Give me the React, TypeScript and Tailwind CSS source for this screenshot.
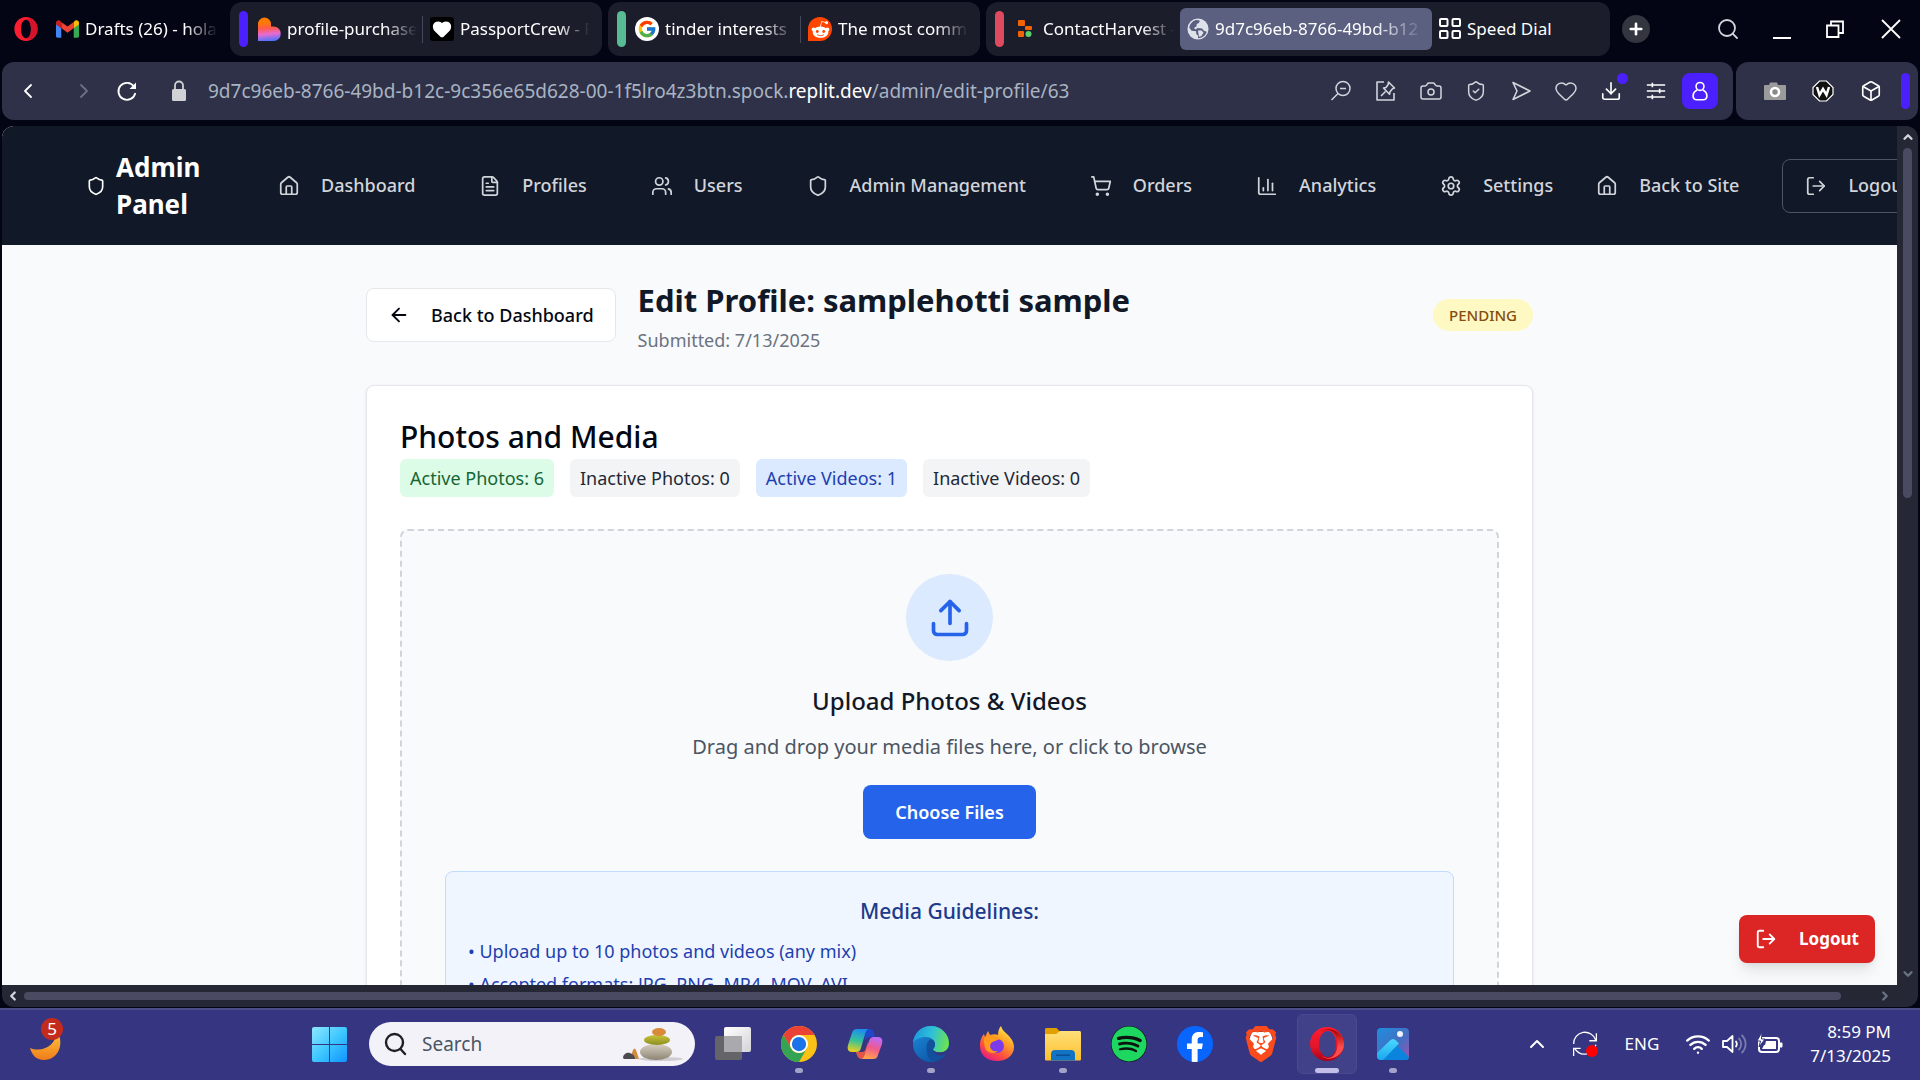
import type { ReactNode } from "react";
import {
  ArrowLeft, Box, Camera, ChartColumn, ChevronDown, ChevronLeft, ChevronRight, ChevronUp, Download, FileText, Heart,
  House, LogOut, Plus, Search, Settings, Shield, ShieldCheck, ShoppingCart, Upload, Users, Wifi,
} from "lucide-react";
import { FcGoogle } from "react-icons/fc";
import { FaFacebookF, FaRedditAlien, FaSpotify } from "react-icons/fa";
import { SiBrave } from "react-icons/si";

const ui = "font-['Noto_Sans','Open_Sans',sans-serif]";

/* ---------- brand marks ---------- */

const operaRing =
  "M16 0C7.200 0 .5 7 .5 16S7.200 32 16 32s15.500-7 15.500-16S24.800 0 16 0zm0 3.800c4 0 6.600 5 6.600 12.200S20 28.200 16 28.200 9.400 23.200 9.400 16 12 3.800 16 3.800z";

function OperaTabLogo() {
  return (
    <svg viewBox="0 0 32 32" className="size-6" aria-hidden="true">
      <path fillRule="evenodd" fill="#fa1e30" d={operaRing} />
      <path fill="#c8102a" opacity=".75" d="M16 3.800c2-2 5-2.400 7.500-1.200C28 5 31.500 10 31.500 16c0 6-3.500 11-8 13.400-2.500 1.200-5.500.8-7.500-1.200 4 0 6.600-5 6.600-12.200S20 3.800 16 3.800z" />
    </svg>
  );
}

function OperaTaskLogo() {
  return (
    <svg viewBox="0 0 36 36" className="size-9" aria-hidden="true">
      <defs>
        <linearGradient id="opl" x1="0" y1="0" x2="0" y2="1"><stop offset="0" stopColor="#ff1b2d" /><stop offset=".6" stopColor="#e0152a" /><stop offset="1" stopColor="#a70014" /></linearGradient>
        <linearGradient id="opr" x1="0" y1="0" x2="0" y2="1"><stop offset="0" stopColor="#9c0000" /><stop offset=".6" stopColor="#ff4b4b" /><stop offset="1" stopColor="#ff4b4b" /></linearGradient>
      </defs>
      <path fill="url(#opl)" fillRule="evenodd" d="M18 1a17 17 0 1 0 0 34 17 17 0 0 0 0-34zm1 4c5 0 8 6 8 13s-3 13-8 13c-5 0-9-5.500-9-13s4-13 9-13z" />
      <path fill="url(#opr)" d="M12.500 6.500C15 3.800 18.500 2.800 22 3.500 29.500 5 35 10.500 35 18s-5.500 13-13 14.500c-3.500.7-7-.3-9.500-3 2 1.600 4.200 2.500 6.500 2.500 5.500 0 9.500-6.200 9.500-14S24.500 4 19 4c-2.300 0-4.500.9-6.500 2.500z" />
    </svg>
  );
}

function GmailLogo() {
  return (
    <svg viewBox="0 0 24 18" className="h-[18px] w-[23px] shrink-0" aria-hidden="true">
      <path fill="#4285f4" d="M0 3v13.500C0 17.300.7 18 1.600 18H5.500V8z" />
      <path fill="#34a853" d="M24 3v13.500c0 .8-.7 1.500-1.600 1.500H18.500V8z" />
      <path fill="#ea4335" d="M5.500 8V1.600L12 6.500l6.500-4.900V8L12 13z" />
      <path fill="#c5221f" d="M0 2.500v1.700L5.500 8.300V1.600L4.200.5C2.400-.8 0 .4 0 2.500z" />
      <path fill="#fbbc04" d="M24 2.500v1.700l-5.500 4.100V1.600L19.800.5C21.600-.8 24 .4 24 2.500z" />
    </svg>
  );
}

function LovableLogo() {
  return (
    <svg viewBox="0 0 24 24" className="size-6 shrink-0" aria-hidden="true">
      <defs>
        <linearGradient id="lovable" x1=".4" y1="0" x2=".5" y2="1">
          <stop offset=".2" stopColor="#ff7a00" />
          <stop offset=".45" stopColor="#ff5a4e" />
          <stop offset=".7" stopColor="#e86bd0" />
          <stop offset="1" stopColor="#4b73ff" />
        </linearGradient>
      </defs>
      <path fill="url(#lovable)" d="M1 7a6.500 6.500 0 0 1 13 0v2.500h2.500a7.200 7.200 0 0 1 0 14.500H1z" />
    </svg>
  );
}

function HeartTile() {
  return (
    <span className="flex size-6 shrink-0 items-center justify-center rounded-[3px] bg-black">
      <Heart className="size-5 fill-white text-white" />
    </span>
  );
}

function GoogleTile() {
  return (
    <span className="flex size-6 shrink-0 items-center justify-center rounded-full bg-white">
      <FcGoogle className="size-5" />
    </span>
  );
}

function RedditTile() {
  return (
    <span className="flex size-6 shrink-0 items-center justify-center rounded-full rounded-bl-none bg-[#ff4500]">
      <FaRedditAlien className="size-[19px] text-white" />
    </span>
  );
}

function ReplitLogo() {
  return (
    <svg viewBox="0 0 24 24" className="size-6 shrink-0" aria-hidden="true">
      <rect x="5" y="3" width="7" height="6" rx="1" fill="#f26207" />
      <rect x="12" y="9" width="7" height="4" rx="1" fill="#f26207" />
      <rect x="5" y="14" width="6" height="6" rx="1" fill="#f26207" />
      <circle cx="15.500" cy="17" r="3" fill="#5fd068" />
    </svg>
  );
}

function GlobeIcon() {
  return (
    <svg viewBox="0 0 24 24" className="size-[22px] shrink-0" aria-hidden="true">
      <circle cx="12" cy="12" r="11.500" fill="#dfe2e8" />
      <path fill="#5b6080" d="M9 2.500c-3 1-6 4-6.500 8l2.500 3.500 5 .5v3l2 1.500v3c5 0 8.500-3 9.500-7l-3-1-2-2.500-5-.5-2 1.500-2-1.500 3-2V6.500l2.500-1 1-2.500c-1.500-.7-3.500-.9-5-.5z" />
      <path fill="#dfe2e8" d="M12 13.500h4l2 2.500-2.500 4-2.500.5z" />
    </svg>
  );
}

/* ---------- browser tabs ---------- */

function Tab({ icon, label, className, fade = true }: { icon: ReactNode; label: string; className: string; fade?: boolean }) {
  return (
    <button type="button" className={`flex h-[42px] shrink-0 items-center gap-[6px] overflow-hidden rounded-md text-left ${className}`}>
      {icon}
      <span
        className={
          fade
            ? "min-w-0 flex-1 overflow-hidden whitespace-nowrap [mask-image:linear-gradient(to_right,black_75%,transparent)]"
            : "whitespace-nowrap"
        }
      >
        {label}
      </span>
    </button>
  );
}

function TabGroup({ pill, className, children }: { pill: string; className: string; children: ReactNode }) {
  return (
    <div className={`flex h-[54px] shrink-0 items-center rounded-xl bg-[#1b1d2b] pl-[9px] ${className}`}>
      <span className={`h-9 w-[9px] shrink-0 rounded-full ${pill}`} />
      {children}
    </div>
  );
}

function TabStrip() {
  return (
    <div className="flex h-[62px] items-center pb-1 pl-[14px] pr-[15px] text-[17px] text-white">
      <button type="button" aria-label="Opera menu" className="shrink-0">
        <OperaTabLogo />
      </button>
      <Tab className="ml-[18px] w-[162px]" icon={<GmailLogo />} label="Drafts (26) - hola" />
      <TabGroup pill="bg-[#4c1fff]" className="ml-3 w-[372px]">
        <Tab className="ml-[9px] w-40" icon={<LovableLogo />} label="profile-purchase" />
        <span className="ml-[5px] h-[27px] w-px bg-[#45485a]" />
        <Tab className="ml-[7px] w-40" icon={<HeartTile />} label="PassportCrew - F" />
      </TabGroup>
      <TabGroup pill="bg-[#57bb94]" className="ml-[6px] w-[372px]">
        <Tab className="ml-[9px] w-40" icon={<GoogleTile />} label="tinder interests |" />
        <span className="ml-[5px] h-[27px] w-px bg-[#45485a]" />
        <Tab className="ml-[7px] w-40" icon={<RedditTile />} label="The most comm" />
      </TabGroup>
      <TabGroup pill="bg-[#e04a5f]" className="ml-[6px] w-[624px]">
        <Tab className="ml-[9px] w-[162px]" icon={<ReplitLogo />} label="ContactHarvest -" />
        <Tab className="ml-[5px] w-[252px] bg-[#5b6080] px-[7px]" icon={<GlobeIcon />} label="9d7c96eb-8766-49bd-b12" />
        <Tab
          className="ml-[7px]"
          fade={false}
          label="Speed Dial"
          icon={
            <svg viewBox="0 0 22 22" className="size-[22px]" fill="none" stroke="#fff" strokeWidth="2" aria-hidden="true">
              <rect x="1" y="1" width="7.500" height="7" rx="1" />
              <rect x="13.500" y="1" width="7.500" height="7" rx="1" />
              <rect x="1" y="13" width="7.500" height="7" rx="1" />
              <rect x="13.500" y="13" width="7.500" height="7" rx="1" />
            </svg>
          }
        />
      </TabGroup>
      <button type="button" aria-label="New tab" className="ml-3 flex size-7 shrink-0 items-center justify-center rounded-full bg-[#33353f]">
        <Plus className="size-[18px]" strokeWidth={3.500} />
      </button>
      <div className="ml-auto flex items-center gap-[31px]">
        <button type="button" aria-label="Search tabs"><Search className="size-6 text-gray-300" strokeWidth={1.800} /></button>
        <button type="button" aria-label="Minimize" className="flex h-5 w-[22px] items-end justify-center">
          <span className="h-[2px] w-[18px] bg-white" />
        </button>
        <button type="button" aria-label="Restore">
          <svg viewBox="0 0 22 22" className="size-[22px]" fill="none" stroke="#fff" strokeWidth="1.800" aria-hidden="true">
            <path d="M3 7.500h11.500V19H3z" />
            <path d="M7 7V3.500h12V15h-4" />
          </svg>
        </button>
        <button type="button" aria-label="Close">
          <svg viewBox="0 0 28 28" className="size-7" fill="none" stroke="#fff" strokeWidth="1.800" aria-hidden="true">
            <path d="m5 5 18 18M23 5 5 23" />
          </svg>
        </button>
      </div>
    </div>
  );
}

/* ---------- address bar ---------- */

function BarButton({ label, children }: { label: string; children: ReactNode }) {
  return (
    <button type="button" aria-label={label} className="relative flex size-[25px] shrink-0 items-center justify-center">
      {children}
    </button>
  );
}

function AddressBar() {
  return (
    <div className="flex h-[58px] gap-[3px] px-[2px] text-gray-300">
      <div className="flex min-w-0 flex-1 items-center rounded-xl bg-[#2e3147] pl-[14px] pr-[15px]">
        <button type="button" aria-label="Back" className="text-white"><ChevronLeft className="size-6" strokeWidth={1.800} /></button>
        <button type="button" aria-label="Forward" className="ml-8 text-[#6d7085]"><ChevronRight className="size-6" strokeWidth={1.800} /></button>
        <button type="button" aria-label="Reload" className="ml-[19px] text-white">
          <svg viewBox="0 0 24 24" className="size-6" fill="none" stroke="currentColor" strokeWidth="1.800" aria-hidden="true">
            <path d="M19 7.500A8.500 8.500 0 1 0 20.300 14" />
            <path fill="currentColor" stroke="none" d="M21 3.500v6.500h-6.500z" />
          </svg>
        </button>
        <svg viewBox="0 0 18 22" className="ml-[31px] h-[22px] w-[18px] shrink-0" aria-hidden="true">
          <rect x="2" y="9" width="14" height="12" rx="1.500" fill="#cfd1d4" />
          <path d="M5 10V5.500a4 4 0 0 1 8 0V10" fill="none" stroke="#cfd1d4" strokeWidth="1.800" />
        </svg>
        <p className="ml-5 min-w-0 flex-1 overflow-hidden whitespace-nowrap text-[19px] text-[#a9b3c2]">
          9d7c96eb-8766-49bd-b12c-9c356e65d628-00-1f5lro4z3btn.spock.<span className="text-white">replit.dev</span>/admin/edit-profile/63
        </p>
        <div className="flex items-center gap-5">
          <BarButton label="Zoom">
            <svg viewBox="0 0 24 24" className="size-6" fill="none" stroke="currentColor" strokeWidth="1.500" aria-hidden="true">
              <circle cx="14" cy="9.500" r="7" />
              <path d="m9 14.500-6.500 6.500M11 9.500h6" />
            </svg>
          </BarButton>
          <BarButton label="Edit pinboard">
            <svg viewBox="0 0 24 24" className="size-6" fill="none" stroke="currentColor" strokeWidth="1.600" strokeLinejoin="round" aria-hidden="true">
              <path d="M10 3H3v18h17v-7" />
              <path d="m14.500 3 6 6-2 .8-2.500 3-.5 2.500-6-6.300 2.500-.5 2.200-3zM11.500 12.500 7 17" />
            </svg>
          </BarButton>
          <BarButton label="Snapshot"><Camera className="size-6" strokeWidth={1.500} /></BarButton>
          <BarButton label="Privacy protection"><ShieldCheck className="size-[22px]" strokeWidth={1.600} /></BarButton>
          <BarButton label="Send">
            <svg viewBox="0 0 24 24" className="size-6" fill="none" stroke="currentColor" strokeWidth="1.600" strokeLinejoin="round" aria-hidden="true">
              <path d="M4 3.500 21 12 4 20.500 8 12z" />
            </svg>
          </BarButton>
          <BarButton label="Bookmark"><Heart className="size-6" strokeWidth={1.500} /></BarButton>
          <BarButton label="Downloads">
            <Download className="size-[22px] text-white" strokeWidth={1.800} />
            <span className="absolute -right-[5px] -top-[6px] size-[11px] rounded-full bg-[#4c1fff]" />
          </BarButton>
          <BarButton label="Easy setup">
            <svg viewBox="0 0 24 24" className="size-[22px]" fill="none" stroke="#fff" strokeWidth="1.800" aria-hidden="true">
              <path d="M2 5.500h20M2 12h20M2 18.500h20M8 3v5M16 9.500v5M8 16v5" />
            </svg>
          </BarButton>
        </div>
        <button type="button" aria-label="Account" className="ml-[14px] flex size-9 shrink-0 items-center justify-center rounded-lg bg-[#4c1fff]">
          <svg viewBox="0 0 24 24" className="size-[22px]" fill="none" stroke="#fff" strokeWidth="1.800" aria-hidden="true">
            <circle cx="12" cy="7" r="4.300" />
            <path d="M9 11c-3 1.300-4.500 3.500-4.500 6.500 0 2.500 1.500 4 4 4h7c2.500 0 4-1.500 4-4 0-3-1.500-5.200-4.500-6.500" />
          </svg>
        </button>
      </div>
      <div className="flex w-[182px] shrink-0 items-center rounded-xl bg-[#2e3147] pl-[26px] pr-2">
        <div className="flex items-center gap-[23px]">
          <BarButton label="Screenshot extension">
            <svg viewBox="0 0 24 24" className="size-6" aria-hidden="true">
              <path fill="#9b9b9b" d="M2 6h4l1-2.500h7L15 6h7a1 1 0 0 1 1 1v13a1 1 0 0 1-1 1H2a1 1 0 0 1-1-1V7a1 1 0 0 1 1-1z" />
              <circle cx="12" cy="13" r="4" fill="#8a8a8a" stroke="#fff" strokeWidth="2.600" />
            </svg>
          </BarButton>
          <BarButton label="W extension">
            <svg viewBox="0 0 24 24" className="size-6" aria-hidden="true">
              <path fill="#111" stroke="#fff" strokeWidth="1.200" d="M8.500 2h7l6.500 6.500v7L15.500 22h-7L2 15.500v-7z" />
              <path fill="none" stroke="#fff" strokeWidth="2.500" d="m6 8 2.500 8L12 10l3.500 6L18 8" />
            </svg>
          </BarButton>
          <BarButton label="Extensions"><Box className="size-[22px] text-white" strokeWidth={1.800} /></BarButton>
        </div>
        <span className="ml-auto h-9 w-[9px] rounded-full bg-[#4c1fff]" />
      </div>
    </div>
  );
}

/* ---------- admin page ---------- */

const navItems = [
  { label: "Dashboard", Icon: House },
  { label: "Profiles", Icon: FileText },
  { label: "Users", Icon: Users },
  { label: "Admin Management", Icon: Shield },
  { label: "Orders", Icon: ShoppingCart },
  { label: "Analytics", Icon: ChartColumn },
  { label: "Settings", Icon: Settings },
];

function AdminNav() {
  return (
    <header className="flex h-[119px] items-center overflow-hidden whitespace-nowrap bg-[#111827] pl-[84px] text-[18px] font-medium text-[#d1d5db]">
      <a href="#admin" className="flex shrink-0 items-center gap-[10px] text-[26px] font-bold leading-[37px] text-white">
        <Shield className="size-5" />
        <span className="w-[85px] whitespace-normal">Admin Panel</span>
      </a>
      <nav className="ml-[77px] flex shrink-0 items-center gap-16">
        {navItems.map(({ label, Icon }) => (
          <a key={label} href="#nav" className="flex items-center gap-[21px]">
            <Icon className="size-[22px]" strokeWidth={1.900} />
            {label}
          </a>
        ))}
      </nav>
      <a href="#site" className="ml-[43px] flex shrink-0 items-center gap-[21px]">
        <House className="size-[22px]" strokeWidth={1.900} />
        Back to Site
      </a>
      <button type="button" className="ml-[43px] flex h-[54px] shrink-0 items-center gap-[21px] rounded-lg border border-[#4b5563] px-[22px]">
        <LogOut className="size-[22px]" strokeWidth={1.900} />
        Logout
      </button>
    </header>
  );
}

const counters = [
  { label: "Active Photos: 6", tone: "bg-[#dcfce7] text-[#166534]" },
  { label: "Inactive Photos: 0", tone: "bg-[#f3f4f6] text-[#1f2937]" },
  { label: "Active Videos: 1", tone: "bg-[#dbeafe] text-[#1e40af]" },
  { label: "Inactive Videos: 0", tone: "bg-[#f3f4f6] text-[#1f2937]" },
];

function EditProfile() {
  return (
    <main className="mx-auto w-full max-w-[1167px] pt-[30px]">
      <div className="flex items-center">
        <button type="button" className="flex h-[54px] items-center gap-[21px] rounded-lg border border-gray-200 bg-white px-[21px] text-[18px] font-medium text-gray-950">
          <ArrowLeft className="size-[22px]" />
          Back to Dashboard
        </button>
        <div className="ml-[22px]">
          <h1 className="text-[31px] font-bold leading-[50px] text-[#111827]">Edit Profile: samplehotti sample</h1>
          <p className="text-[18px] leading-[30px] text-[#6b7280]">Submitted: 7/13/2025</p>
        </div>
        <span className="ml-auto rounded-full bg-[#fef9c3] px-4 text-[15px] font-medium leading-8 text-[#854d0e]">PENDING</span>
      </div>
      <section className="mt-[30px] rounded-lg border border-gray-200 bg-white px-[33px] pb-10 pt-[33px] shadow-sm">
        <h2 className="text-[30px] font-medium leading-9 text-gray-950">Photos and Media</h2>
        <div className="mt-1 flex gap-4 text-[18px] leading-[38px]">
          {counters.map(({ label, tone }) => (
            <span key={label} className={`rounded-md px-[10px] ${tone}`}>{label}</span>
          ))}
        </div>
        <div className="mt-8 flex flex-col items-center rounded-lg border-2 border-dashed border-[#d1d5db] bg-[#f9fafb] p-[43px]">
          <span className="flex size-[87px] items-center justify-center rounded-full bg-[#dbeafe]">
            <Upload className="size-11 text-[#2563eb]" />
          </span>
          <h3 className="mt-6 text-[24px] font-medium leading-8 text-[#111827]">Upload Photos &amp; Videos</h3>
          <p className="mt-4 text-[20px] leading-7 text-[#4b5563]">Drag and drop your media files here, or click to browse</p>
          <button type="button" className="mt-6 h-[54px] rounded-lg bg-[#2563eb] px-8 text-[18px] font-semibold text-white">Choose Files</button>
          <div className="mt-8 w-full rounded-lg border border-[#bfdbfe] bg-[#eff6ff] px-[22px] py-[25px]">
            <h4 className="text-center text-[21px] font-medium leading-7 text-[#1e3a8a]">Media Guidelines:</h4>
            <ul className="mt-3 space-y-[5px] text-[18px] leading-7 text-[#1e40af]">
              <li>• Upload up to 10 photos and videos (any mix)</li>
              <li>• Accepted formats: JPG, PNG, MP4, MOV, AVI</li>
            </ul>
          </div>
        </div>
      </section>
    </main>
  );
}

function Viewport() {
  return (
    <div className="mt-[6px] flex min-h-0 flex-1 flex-col overflow-hidden rounded-xl bg-[#252834]">
      <div className="flex min-h-0 flex-1">
        <div className="relative min-w-0 flex-1 overflow-hidden bg-[#f9fafb]">
          <AdminNav />
          <EditProfile />
          <button type="button" className="absolute bottom-[22px] right-[22px] flex h-12 items-center gap-[22px] rounded-lg bg-[#dc2626] px-4 text-[17px] font-bold text-white shadow-lg">
            <LogOut className="size-[22px]" />
            Logout
          </button>
        </div>
        <div className="flex w-[21px] flex-col items-center pt-1 text-gray-300">
          <ChevronUp className="size-[14px]" strokeWidth={4} />
          <div className="mt-[4px] h-[350px] w-[9px] rounded-full bg-[#4a4b63]" />
          <ChevronDown className="mb-1 mt-auto size-[14px] text-gray-500" strokeWidth={4} />
        </div>
      </div>
      <div className="flex h-[22px] shrink-0 items-center pl-1 pr-[26px] text-gray-300">
        <ChevronLeft className="size-[14px]" strokeWidth={4} />
        <div className="ml-1 mr-[37px] h-2 flex-1 rounded-full bg-[#4a4b63]" />
        <ChevronRight className="size-[14px] text-gray-500" strokeWidth={4} />
      </div>
    </div>
  );
}

/* ---------- taskbar ---------- */

const taskIcons: { name: string; run?: "dot" | "active"; icon: ReactNode }[] = [
  {
    name: "Task view",
    icon: (
      <svg viewBox="0 0 36 36" className="size-9" aria-hidden="true">
        <defs><linearGradient id="tv" x1="0" y1="0" x2="1" y2="1"><stop offset="0" stopColor="#fff" /><stop offset="1" stopColor="#d4d4d8" /></linearGradient></defs>
        <rect x="0" y="10" width="27" height="24" rx="2" fill="#646469" />
        <rect x="9" y="1" width="27" height="25" rx="2" fill="url(#tv)" />
        <path d="M9 10h18v16H11a2 2 0 0 1-2-2z" fill="#a9a9ae" />
      </svg>
    ),
  },
  {
    name: "Chrome",
    run: "dot",
    icon: (
      <svg viewBox="0 0 48 48" className="size-9" aria-hidden="true">
        <circle cx="24" cy="24" r="24" fill="#fbc116" />
        <path fill="#ea4335" d="M24 0a24 24 0 0 1 20.800 12H24a12 12 0 0 0-10.400 18L3.200 12A24 24 0 0 1 24 0z" />
        <path fill="#34a353" d="M3.200 12 13.600 30A12 12 0 0 0 34.400 30L24 48A24 24 0 0 1 3.200 12z" />
        <circle cx="24" cy="24" r="12" fill="#fff" />
        <circle cx="24" cy="24" r="9.500" fill="#1a73e8" />
      </svg>
    ),
  },
  {
    name: "Copilot",
    icon: (
      <svg viewBox="0 0 36 36" className="size-9" aria-hidden="true">
        <defs>
          <linearGradient id="cpa" x1=".5" y1="0" x2=".3" y2="1"><stop offset="0" stopColor="#1b8cf0" /><stop offset=".5" stopColor="#35c29a" /><stop offset="1" stopColor="#f0cf1c" /></linearGradient>
          <linearGradient id="cpb" x1=".7" y1="0" x2=".4" y2="1"><stop offset="0" stopColor="#b76bff" /><stop offset=".5" stopColor="#f0598e" /><stop offset="1" stopColor="#ffa34d" /></linearGradient>
        </defs>
        <path fill="#2046c9" d="M17 3h6c2 0 3 1 3.700 3l1.300 5h-5c-3 0-4 2-5 5z" />
        <path fill="#e0574a" d="M9 26h6c2 0 3-1 4-4l2-6 1 8c-1 5-3 9-7 9-4 0-5-3-6-7z" />
        <path fill="url(#cpa)" d="M10 3h12c-2 0-3 2-4 5l-4 14c-1 3-2 4-5 4H5c-4 0-5-3-4-7l4-12c1-3 2-4 5-4z" />
        <path fill="url(#cpb)" d="M26 33H14c2 0 3-2 4-5l4-13c1-3 2-4 5-4h4c4 0 5 3 4 7l-4 11c-1 3-2 4-5 4z" />
      </svg>
    ),
  },
  {
    name: "Edge",
    run: "dot",
    icon: (
      <svg viewBox="0 0 36 36" className="size-9" aria-hidden="true">
        <defs>
          <linearGradient id="ega" x1="0" y1=".3" x2="1" y2=".5"><stop offset="0" stopColor="#1c98dc" /><stop offset=".5" stopColor="#2fc0d8" /><stop offset="1" stopColor="#6be34f" /></linearGradient>
          <linearGradient id="egb" x1="0" y1="0" x2=".8" y2="1"><stop offset="0" stopColor="#1b8fdb" /><stop offset="1" stopColor="#0c4fa0" /></linearGradient>
        </defs>
        <circle cx="18" cy="18" r="18" fill="url(#egb)" />
        <path fill="url(#ega)" d="M0 17C1 7 8 0 18 0c10 0 18 8 18 17 0 6-4 9.500-9 9.500-4 0-7-1.500-7-3 0-1 2-2 2-5 0-4-4-7.500-9-7.500-6 0-11 2.500-13 6z" />
        <path fill="#124f9c" d="M14 19c0-3 2-5.500 4.500-5.500 2 0 3.500 2 3.500 5 0 3-2 4-2 5 0 1.500 3 3 7 3 3 0 5-.8 6.500-2-3 6-9 11.500-13 11.300C15 34 12.500 25 14 19z" />
        <path fill="#353581" d="M20 23.500c0 1.500 3 3 7 3s7-1.500 8.500-5V28l-2.500 1c-.5-.5-1-.5-2 0-5 1.500-11-1-11-5.500z" />
      </svg>
    ),
  },
  {
    name: "Firefox",
    icon: (
      <svg viewBox="0 0 36 36" className="size-9" aria-hidden="true">
        <defs>
          <linearGradient id="ffa" x1=".8" y1="0" x2=".2" y2="1"><stop offset="0" stopColor="#fff04f" /><stop offset=".35" stopColor="#ffa52a" /><stop offset=".7" stopColor="#ff4f3d" /><stop offset="1" stopColor="#e0148c" /></linearGradient>
        </defs>
        <path fill="url(#ffa)" d="M22 0c1 4 4 6 7 9 3 3 6 7 6 12 0 8-7 14-17 14S1 29 1 20c0-6 2-10 4-12l1 3 3-6 2 4c3-1 6-1 8 0 0-4 1-7 3-9z" />
        <circle cx="18" cy="20" r="7" fill="#7b3bea" />
        <path fill="#ff9a1f" d="M5 12c4-3 9-3 13-1l3 2-5 2c-3 1-5 2-5 5 0 4 4 6 8 5-4 4-11 2-13-3-1-4-1-7-1-10z" />
      </svg>
    ),
  },
  {
    name: "File Explorer",
    run: "dot",
    icon: (
      <svg viewBox="0 0 36 36" className="size-9" aria-hidden="true">
        <defs><linearGradient id="fld" x1="0" y1="0" x2="0" y2="1"><stop offset="0" stopColor="#ffe07a" /><stop offset="1" stopColor="#fcbf2d" /></linearGradient></defs>
        <path fill="#e0a000" d="M0 3.500C0 2.500.7 2 1.500 2h10L15 5.500V10H0z" />
        <path fill="url(#fld)" d="M0 8h11l4-3h19.500c.8 0 1.500.6 1.500 1.500V33c0 1-.6 1.500-1.500 1.500h-33C.6 34.500 0 34 0 33z" />
        <path fill="#1272c4" d="M6 28c0-2.500 1.500-4 4-4h16c2.500 0 4 1.500 4 4v6.500H6z" />
        <path fill="#0b4f92" d="M11 28.500h14v1.500H11z" />
      </svg>
    ),
  },
  {
    name: "Spotify",
    icon: <span className="flex size-9 items-center justify-center rounded-full bg-[#0c1410]"><FaSpotify className="size-9 text-[#1ed760]" /></span>,
  },
  {
    name: "Facebook",
    icon: <span className="flex size-9 items-end justify-center overflow-hidden rounded-full bg-[#0866ff]"><FaFacebookF className="h-[30px] w-5 text-white" /></span>,
  },
  {
    name: "Brave",
    icon: (
      <span className="relative flex size-9 items-center justify-center">
        <svg viewBox="0 0 36 36" className="absolute size-9" aria-hidden="true"><path fill="#fff" d="M9 6h18l3 8-4 13-8 6-8-6-4-13z" /></svg>
        <SiBrave className="relative size-9 text-[#fb4b1c]" />
      </span>
    ),
  },
  { name: "Opera", run: "active", icon: <OperaTaskLogo /> },
  {
    name: "Photos",
    run: "dot",
    icon: (
      <svg viewBox="0 0 32 32" className="size-8" aria-hidden="true">
        <defs>
          <linearGradient id="pha" x1="0" y1="0" x2="1" y2="1"><stop offset="0" stopColor="#1b8fdd" /><stop offset=".6" stopColor="#4a6cc0" /><stop offset="1" stopColor="#a452b0" /></linearGradient>
          <linearGradient id="phb" x1="0" y1="0" x2="0" y2="1"><stop offset="0" stopColor="#4bd8ff" /><stop offset="1" stopColor="#1aa8ee" /></linearGradient>
        </defs>
        <rect width="32" height="32" rx="4" fill="url(#pha)" />
        <path fill="#0a84dc" d="M6 32 20 17l12 12v0a3 3 0 0 1-3 3z" />
        <path fill="url(#phb)" d="M0 25 13 12.500c2-2 4-2 6 0l3 3L6 32H4a4 4 0 0 1-4-4z" />
        <circle cx="23" cy="6" r="3" fill="#f1f5fb" />
      </svg>
    ),
  },
];

function SearchArt() {
  return (
    <svg viewBox="0 0 62 36" className="h-9 w-[62px] shrink-0" aria-hidden="true">
      <defs>
        <linearGradient id="st" x1="0" y1="0" x2="0" y2="1"><stop offset="0" stopColor="#d8cfc0" /><stop offset="1" stopColor="#8d8574" /></linearGradient>
        <linearGradient id="sg" x1="0" y1="0" x2="0" y2="1"><stop offset="0" stopColor="#c9c238" /><stop offset="1" stopColor="#8c8f22" /></linearGradient>
      </defs>
      <ellipse cx="38" cy="33" rx="22" ry="2" fill="#cfccd2" />
      <ellipse cx="33" cy="26" rx="16" ry="8" fill="url(#st)" />
      <ellipse cx="34" cy="14" rx="13" ry="5" fill="url(#sg)" />
      <ellipse cx="36" cy="6" rx="7" ry="4" fill="#d68a3a" />
      <path fill="#d08b3c" d="M7 33 10 24c1-2 2-2 3 0l3 9z" />
      <path fill="#4b4b50" d="M0 32c0-4 4-6 7-5 3 1 5 3 5 6H1z" />
    </svg>
  );
}

function Taskbar() {
  return (
    <footer className="flex h-[72px] shrink-0 items-stretch border-t-2 border-[#4d4d88] bg-[#353581] pb-[2px] text-white">
      <button type="button" aria-label="Weather, 5 alerts" className="relative ml-[30px] w-10">
        <svg viewBox="0 0 36 36" className="absolute bottom-[16px] left-0 size-9" aria-hidden="true">
          <defs><linearGradient id="moon" x1="0" y1="0" x2="0" y2="1"><stop offset="0" stopColor="#ffc83d" /><stop offset="1" stopColor="#f07c1c" /></linearGradient></defs>
          <path fill="url(#moon)" d="M27 5c8 13 1 29-13 29-8 0-12-5-14-12 12 5 26-2 27-17z" />
        </svg>
        <span className="absolute left-[11px] top-[8px] flex size-[22px] items-center justify-center rounded-full bg-[#c42b1c] text-[17px]">5</span>
      </button>
      <div className="ml-[242px] flex items-center">
        <button type="button" aria-label="Start">
          <svg viewBox="0 0 35 35" className="size-[35px]" aria-hidden="true">
            <defs><linearGradient id="win" x1="0" y1="0" x2="35" y2="35" gradientUnits="userSpaceOnUse"><stop offset="0" stopColor="#8fe6ff" /><stop offset=".5" stopColor="#3fc8ff" /><stop offset="1" stopColor="#0f94ff" /></linearGradient></defs>
            <path fill="url(#win)" d="M2 0h15v17H0V2a2 2 0 0 1 2-2zM18 0h15a2 2 0 0 1 2 2v15H18zM0 18h17v17H2a2 2 0 0 1-2-2zM18 18h17v15a2 2 0 0 1-2 2H18z" />
          </svg>
        </button>
        <label className="ml-[22px] flex h-11 w-[326px] items-center rounded-full bg-[#f3f2f8] pl-[14px] pr-[10px]">
          <svg viewBox="0 0 24 24" className="size-6 shrink-0" fill="none" stroke="#1f2025" strokeWidth="2.400" strokeLinecap="round" aria-hidden="true">
            <circle cx="11.500" cy="10.500" r="8.500" />
            <path d="m17.500 17 4.500 5" />
          </svg>
          <input type="search" aria-label="Search" placeholder="Search" className="ml-[15px] min-w-0 flex-1 bg-transparent text-[19px] text-gray-600 outline-none placeholder:text-gray-600" />
          <SearchArt />
        </label>
      </div>
      <div className="ml-[8px] flex items-center gap-[6px]">
        {taskIcons.map(({ name, run, icon }) => (
          <button
            key={name}
            type="button"
            aria-label={name}
            className={`relative flex h-[60px] w-[60px] items-center justify-center rounded-md ${run === "active" ? "border border-[#4a4a90] bg-[#41418a]" : ""}`}
          >
            {icon}
            {run === "dot" && <span className="absolute bottom-[1px] h-[5px] w-2 rounded-full bg-[#a3a2c8]" />}
            {run === "active" && <span className="absolute bottom-0 h-[5px] w-6 rounded-full bg-[#c3bfe8]" />}
          </button>
        ))}
      </div>
      <div className="ml-auto flex items-center pr-[29px] text-[17px]">
        <button type="button" aria-label="Hidden icons"><ChevronUp className="size-6" /></button>
        <button type="button" aria-label="Update available" className="relative ml-[23px]">
          <svg viewBox="0 0 24 24" className="size-[26px]" fill="none" stroke="#fff" strokeWidth="1.200" aria-hidden="true">
            <path d="M1.500 12A10.500 10.500 0 0 1 22 8.500M22.500 2v7H16M22 12.500A10.500 10.500 0 0 1 2.500 16M1.500 23v-7H8" />
          </svg>
          <span className="absolute bottom-0 right-0 size-3 rounded-full bg-[#ff0000]" />
        </button>
        <button type="button" className="ml-[27px]">ENG</button>
        <button type="button" aria-label="Network, volume and battery" className="ml-[26px] flex items-center gap-[10px]">
          <Wifi className="size-[26px]" strokeWidth={2.200} />
          <svg viewBox="0 0 26 24" className="h-6 w-[26px]" fill="none" stroke="#fff" strokeWidth="1.800" strokeLinejoin="round" aria-hidden="true">
            <path d="M2 9v6h4l5.500 5V4L6 9zM14.500 9a4 4 0 0 1 0 6" />
            <path d="M17.500 6a8 8 0 0 1 0 12M20.500 3a12 12 0 0 1 0 18" opacity=".35" />
          </svg>
          <svg viewBox="0 0 26 24" className="h-6 w-[26px]" aria-hidden="true">
            <rect x="2" y="6" width="20" height="14" rx="3" fill="none" stroke="#fff" strokeWidth="2" />
            <path fill="#fff" d="M9 9h10v8H5l2-4h1zM23 10.500h1.500a1 1 0 0 1 1 1v3a1 1 0 0 1-1 1H23z" />
            <path fill="#fff" stroke="#353581" strokeWidth="1" d="M5 0 0 9h3.500L2 15l6-8H4.500z" />
          </svg>
        </button>
        <p className="ml-[27px] text-right text-[17px] leading-6">8:59 PM<br />7/13/2025</p>
      </div>
    </footer>
  );
}

export default function App() {
  return (
    <div className={`flex h-screen flex-col overflow-hidden bg-[#030514] ${ui}`}>
      <TabStrip />
      <AddressBar />
      <div className="mb-px flex min-h-0 flex-1 flex-col px-[2px]">
        <Viewport />
      </div>
      <Taskbar />
    </div>
  );
}
